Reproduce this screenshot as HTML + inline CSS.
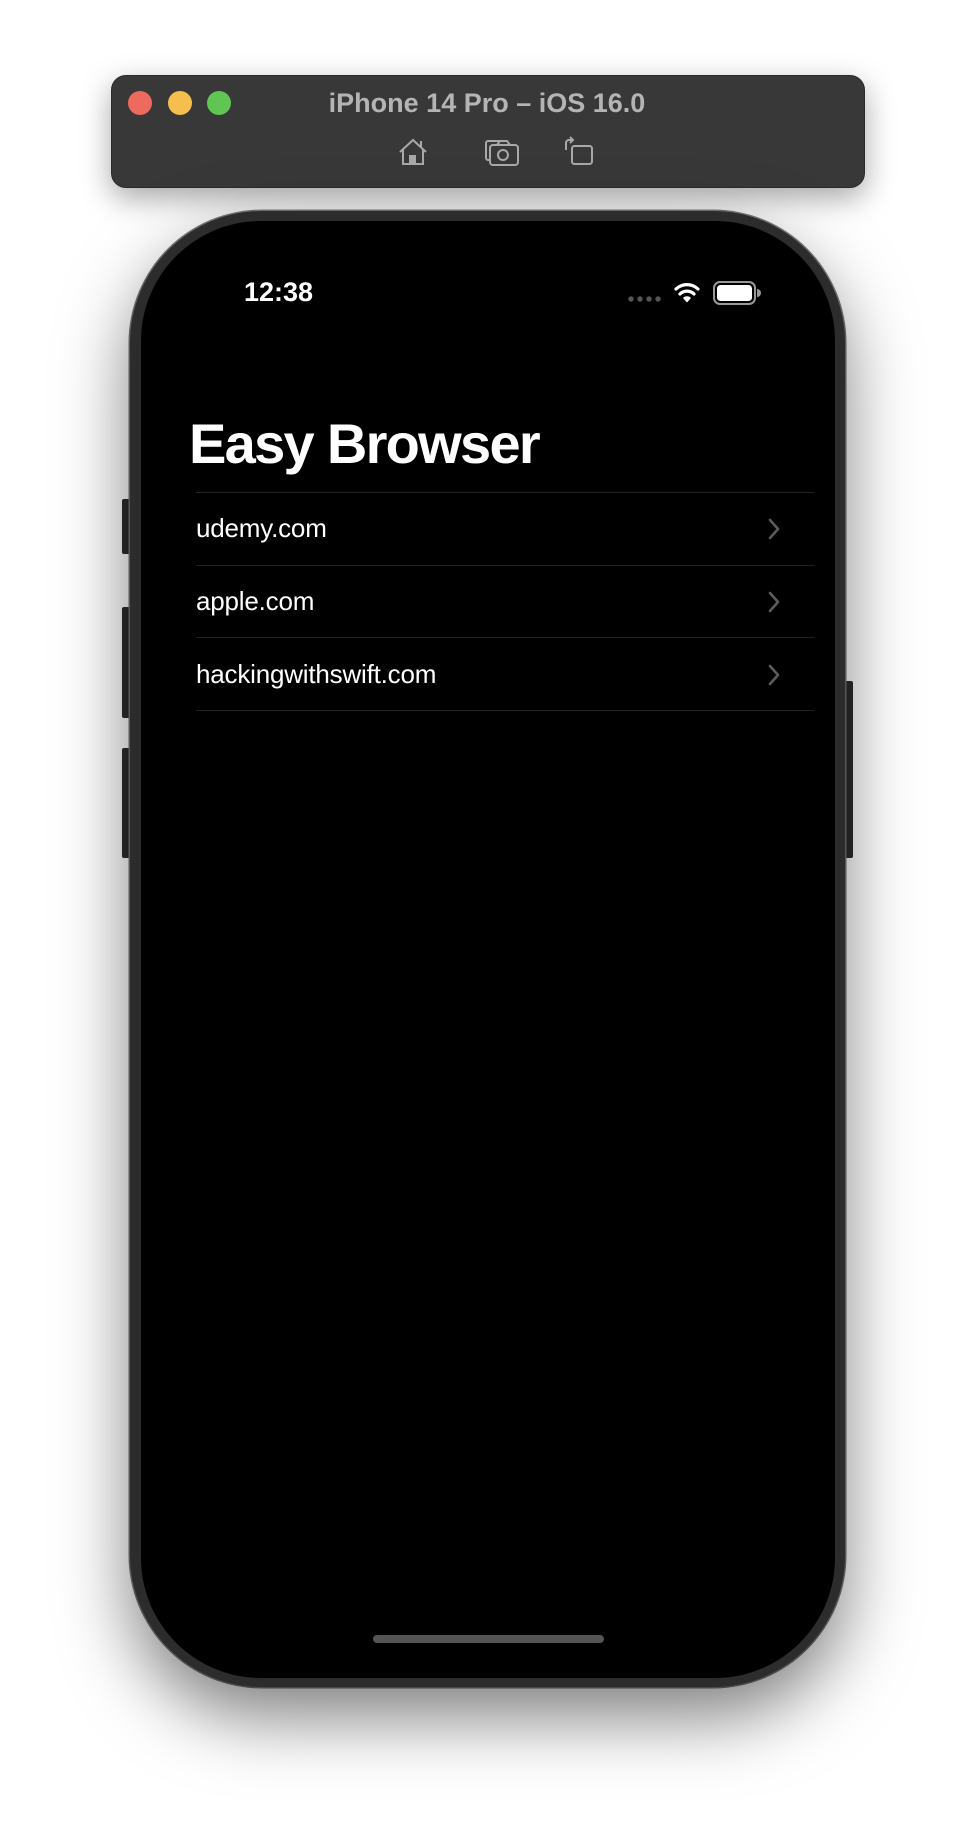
<!DOCTYPE html>
<html><head><style>
html,body{margin:0;padding:0;width:974px;height:1836px;background:#fff;overflow:hidden;position:relative;font-family:"Liberation Sans",sans-serif}
.bar{position:absolute;left:111px;top:75px;width:754px;height:113px;background:#383838;border-radius:15px;box-shadow:0 10px 30px rgba(0,0,0,.35);border:1px solid #2a2a2a;box-sizing:border-box}
.tl{position:absolute;top:91px;width:24px;height:24px;border-radius:50%}
.title{position:absolute;left:0;width:974px;top:88px;text-align:center;color:#b4b4b4;font-weight:bold;font-size:27px;letter-spacing:0px}
.phone{position:absolute;left:130px;top:211px;width:715px;height:1476px;border-radius:132px;background:#2c2c2c;box-shadow:0 30px 70px rgba(0,0,0,.5),0 0 0 1.5px #777;}
.screen{position:absolute;left:141px;top:221px;width:694px;height:1457px;border-radius:120px;background:#000;overflow:hidden}
.btn{position:absolute;background:#2c2c2c;border-radius:2px}
.sep{position:absolute;left:55px;width:618px;height:1px;background:#232323}
.row{position:absolute;left:55px;color:#fff;font-size:26px;letter-spacing:-0.2px}
.chev{position:absolute;left:626px}
</style></head><body>
<div class="bar"></div>
<div class="tl" style="left:128px;background:#ee6a5e"></div>
<div class="tl" style="left:168px;background:#f5bf4f"></div>
<div class="tl" style="left:207px;background:#61c554"></div>
<div class="title">iPhone 14 Pro – iOS 16.0</div>
<svg style="position:absolute;left:396px;top:136px" width="200" height="32" viewBox="396 136 200 32" fill="none" stroke="#a8a8a8" stroke-width="2">
<path d="M400 152 L413 140 L426 152 M403 150 V164 H423 V150 M421 141 V147"/>
<rect x="409" y="155" width="7" height="9" fill="#a8a8a8" stroke="none"/>
<path d="M500 141 H488 A2 2 0 0 0 486 143 V158 A2 2 0 0 0 488 160 H490"/>
<rect x="490" y="145" width="28" height="20" rx="3"/>
<circle cx="503" cy="155" r="5"/>
<path d="M497 145 L500 141 H507 L510 145"/>
<rect x="572" y="146" width="20" height="18" rx="2.5"/>
<path d="M566 150 V143 A3 3 0 0 1 569 140 H573 M570 137 L573 140 L570 143"/>
</svg>
<div class="btn" style="left:122px;top:499px;width:9px;height:55px"></div>
<div class="btn" style="left:122px;top:607px;width:9px;height:111px"></div>
<div class="btn" style="left:122px;top:748px;width:9px;height:110px"></div>
<div class="btn" style="left:844px;top:681px;width:9px;height:177px"></div>
<div class="phone"></div>
<div class="screen">
  <div style="position:absolute;left:103px;top:56px;color:#fff;font-size:27px;font-weight:bold">12:38</div>
  <svg style="position:absolute;left:485px;top:58px" width="140" height="28" viewBox="626 279 140 28">
    <g fill="#555"><circle cx="631" cy="299" r="2.7"/><circle cx="640" cy="299" r="2.7"/><circle cx="649" cy="299" r="2.7"/><circle cx="658" cy="299" r="2.7"/></g>
    <g fill="none" stroke="#fff" stroke-width="3.2" stroke-linecap="round">
      <path d="M676 289 A16 16 0 0 1 698 289"/><path d="M680 294 A10 10 0 0 1 694 294"/>
    </g>
    <path d="M683 298 L687 302.5 L691 298 A5.5 5.5 0 0 0 683 298Z" fill="#fff"/>
    <rect x="714" y="282" width="41" height="22" rx="6" fill="none" stroke="#999" stroke-width="2"/>
    <rect x="717" y="285" width="35" height="16" rx="3.5" fill="#fff"/>
    <path d="M757 289 A3 3 0 0 1 757 297Z" fill="#999"/>
  </svg>
  <div style="position:absolute;left:48px;top:190px;color:#fff;font-size:56px;font-weight:bold;letter-spacing:-1.7px">Easy Browser</div>
  <div class="sep" style="top:271px"></div>
  <div class="row" style="top:292px">udemy.com</div>
  <div class="sep" style="top:344px"></div>
  <div class="row" style="top:365px">apple.com</div>
  <div class="sep" style="top:416px"></div>
  <div class="row" style="top:438px">hackingwithswift.com</div>
  <div class="sep" style="top:489px"></div>
  <svg class="chev" style="top:296px" width="14" height="24"><path d="M3 3 L11 12 L3 21" fill="none" stroke="#5c5c5c" stroke-width="2.6" stroke-linecap="round" stroke-linejoin="round"/></svg>
  <svg class="chev" style="top:369px" width="14" height="24"><path d="M3 3 L11 12 L3 21" fill="none" stroke="#5c5c5c" stroke-width="2.6" stroke-linecap="round" stroke-linejoin="round"/></svg>
  <svg class="chev" style="top:442px" width="14" height="24"><path d="M3 3 L11 12 L3 21" fill="none" stroke="#5c5c5c" stroke-width="2.6" stroke-linecap="round" stroke-linejoin="round"/></svg>
  <div style="position:absolute;left:232px;top:1414px;width:231px;height:8px;border-radius:4px;background:#555"></div>
</div>
</body></html>
